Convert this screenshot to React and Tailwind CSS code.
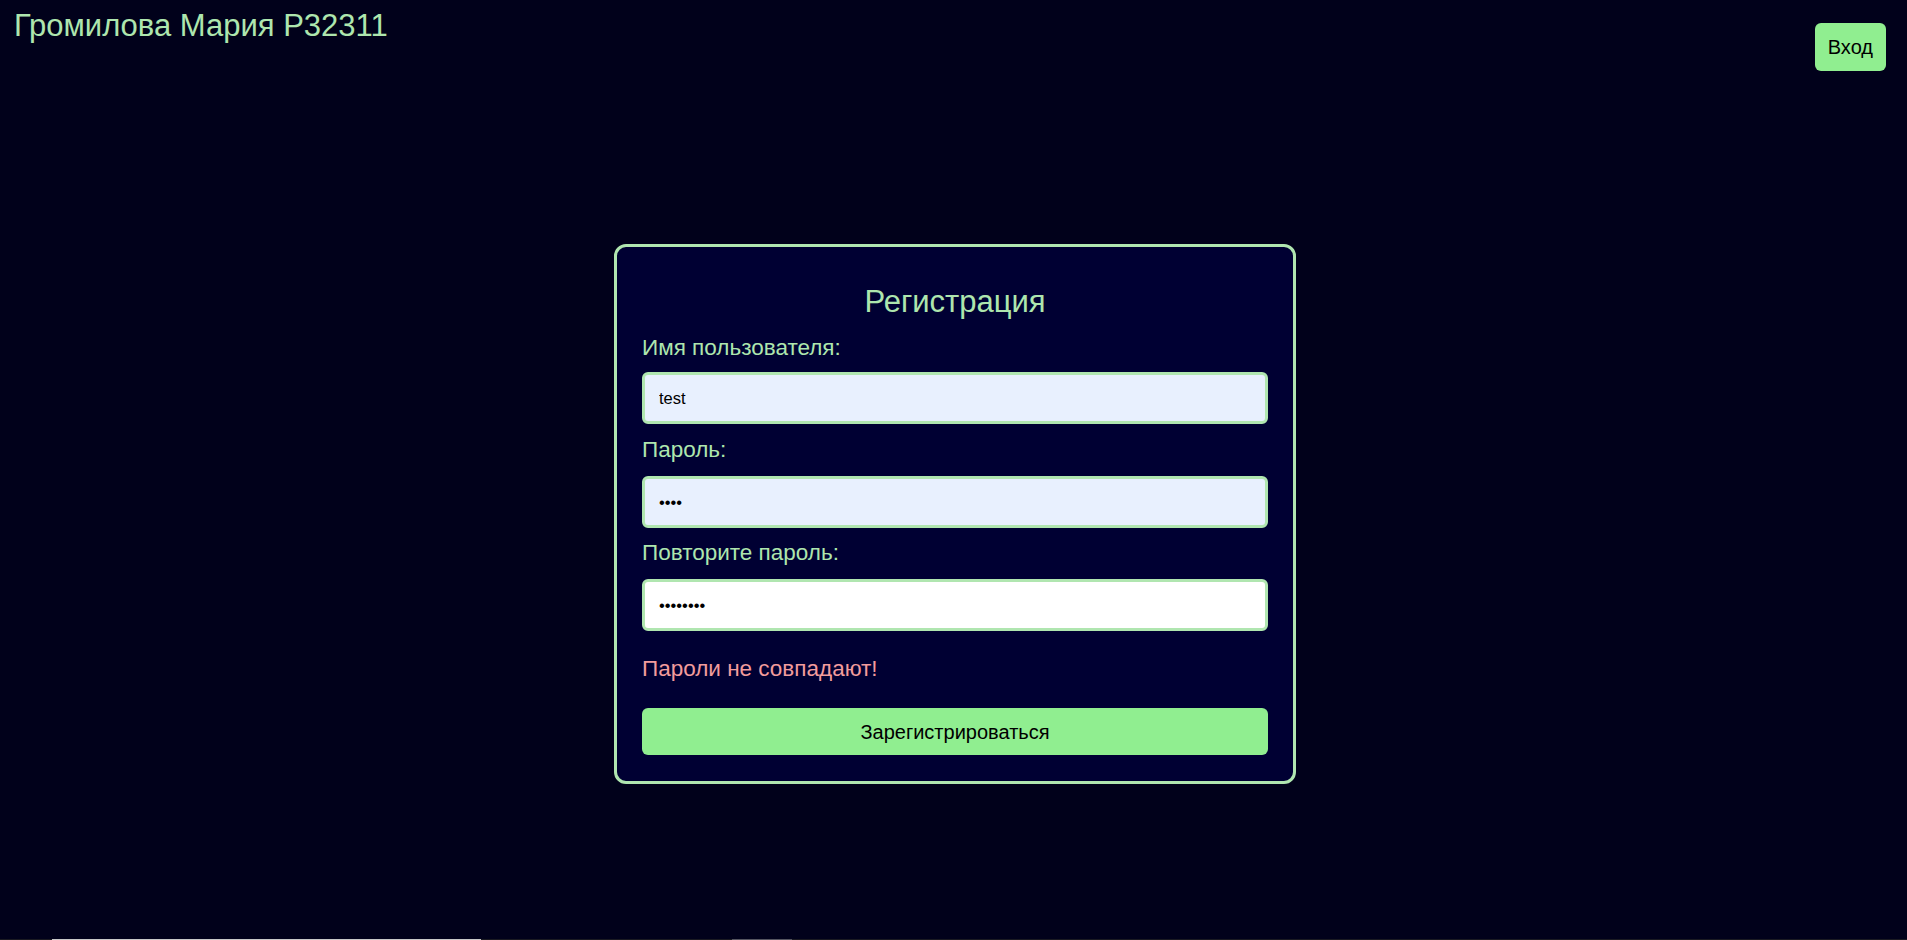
import { useState } from 'react';

const labelCls = 'block text-[22.5px] leading-[26px] text-[#aee6ae]';
const inputCls =
  'block w-full h-[52px] px-[14px] border-[3px] border-[#b0e6b0] rounded-[6px] text-[16.5px] text-black outline-none';

export default function App() {
  const [username, setUsername] = useState('test');
  const [password, setPassword] = useState('test');
  const [repeat, setRepeat] = useState('12345678');

  return (
    <div
      className="h-screen overflow-hidden bg-[#01011b] text-[#aee6ae]"
      style={{ fontFamily: '"Liberation Sans", Arial, sans-serif' }}
    >
      <header className="flex justify-between items-start">
        <h1 className="ml-[14px] mt-[8px] text-[31px] leading-[36px] font-normal">
          Громилова Мария P32311
        </h1>
        <button
          type="button"
          className="mt-[23px] mr-[21px] h-[48px] px-[13px] rounded-[6px] bg-[#90ee90] text-black text-[20px]"
        >
          Вход
        </button>
      </header>

      <main className="mt-[173px] pl-[3px] flex justify-center">
        <form
          className="w-[682px] border-[3px] border-[#b0e6b0] rounded-[12px] bg-[#000033] px-[25px] pt-[37px] pb-[26px]"
          onSubmit={(e) => e.preventDefault()}
        >
          <h2 className="text-center text-[31px] leading-[36px] font-normal">Регистрация</h2>

          <label className={`${labelCls} mt-[15px] mb-[11px]`}>Имя пользователя:</label>
          <input
            type="text"
            value={username}
            onChange={(e) => setUsername(e.target.value)}
            className={`${inputCls} bg-[#e8f0fe]`}
          />

          <label className={`${labelCls} mt-[13px] mb-[13px]`}>Пароль:</label>
          <input
            type="password"
            value={password}
            onChange={(e) => setPassword(e.target.value)}
            className={`${inputCls} bg-[#e8f0fe]`}
          />

          <label className={`${labelCls} mt-[12px] mb-[13px]`}>Повторите пароль:</label>
          <input
            type="password"
            value={repeat}
            onChange={(e) => setRepeat(e.target.value)}
            className={`${inputCls} bg-white`}
          />

          <p className="mt-[25px] text-[22.5px] leading-[26px] text-[#f29c9c]">Пароли не совпадают!</p>

          <button
            type="submit"
            className="mt-[26px] w-full h-[47px] rounded-[6px] bg-[#90ee90] text-black text-[20px]"
          >
            Зарегистрироваться
          </button>
        </form>
      </main>

      {/* scrollbar strip at the very bottom */}
      <div className="fixed bottom-0 left-0 right-0 h-px flex bg-[#1a1a22]">
        <div className="ml-[52px] w-[429px] bg-[#c8c8c8]" />
        <div className="ml-[251px] w-[60px] bg-[#555560]" />
      </div>
    </div>
  );
}
